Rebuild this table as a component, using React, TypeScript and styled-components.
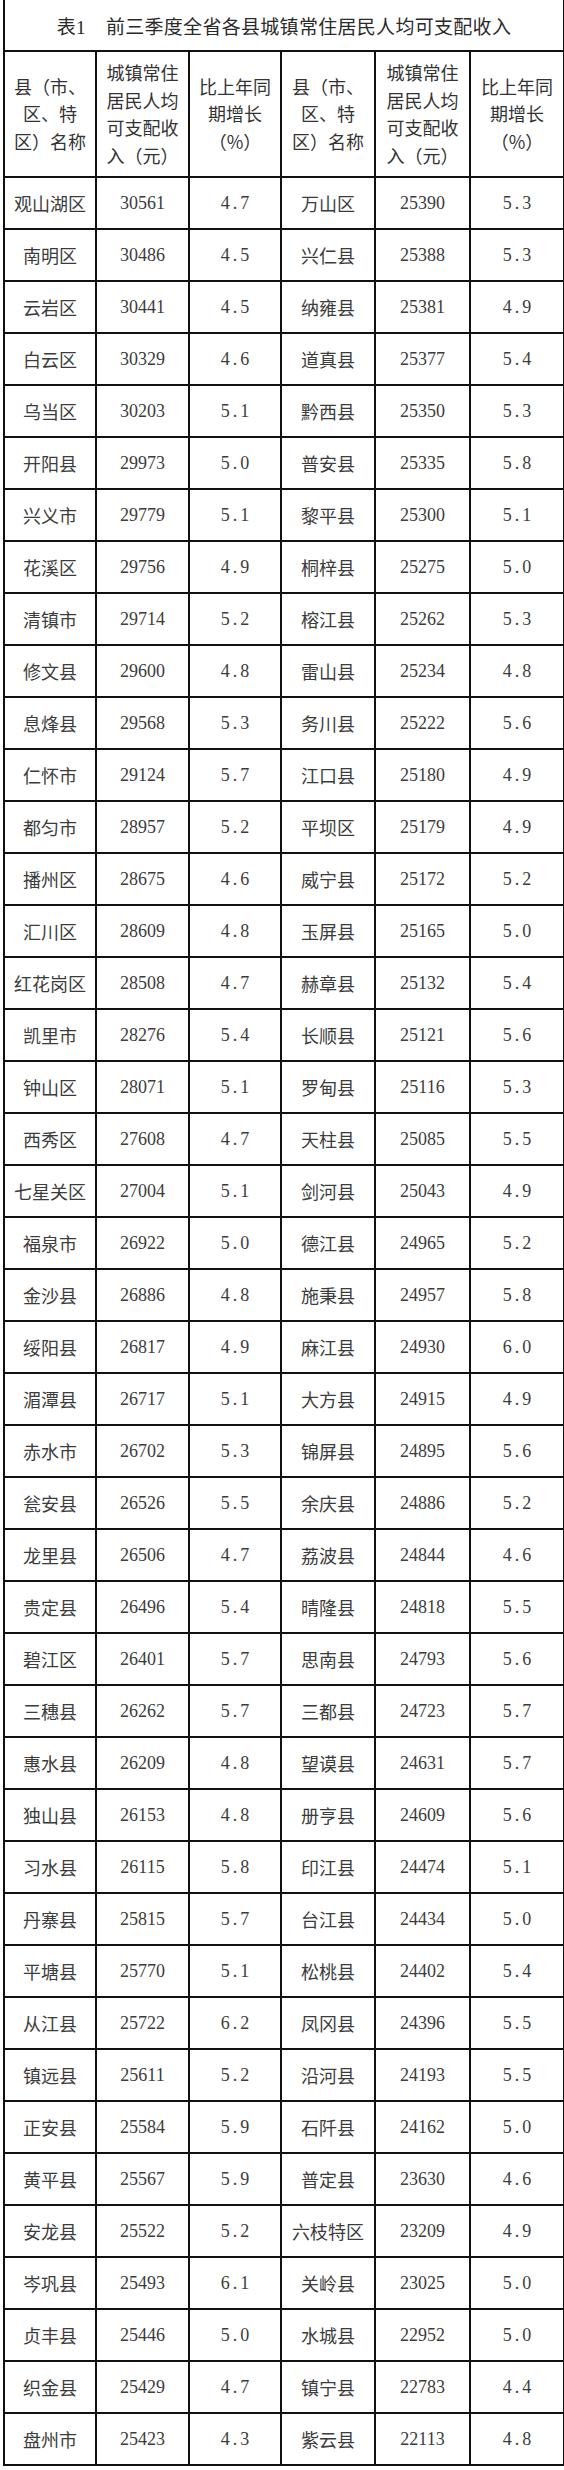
import React from "react";
import styled, { createGlobalStyle } from "styled-components";

const Global = createGlobalStyle`
  html, body { margin: 0; padding: 0; background: #fff; }
  body { font-family: "Liberation Serif", "Noto Sans CJK SC", serif; }
`;

type Row = [string, string, string, string, string, string];

const rows: Row[] = [
  ["观山湖区", "30561", "4.7", "万山区", "25390", "5.3"],
  ["南明区", "30486", "4.5", "兴仁县", "25388", "5.3"],
  ["云岩区", "30441", "4.5", "纳雍县", "25381", "4.9"],
  ["白云区", "30329", "4.6", "道真县", "25377", "5.4"],
  ["乌当区", "30203", "5.1", "黔西县", "25350", "5.3"],
  ["开阳县", "29973", "5.0", "普安县", "25335", "5.8"],
  ["兴义市", "29779", "5.1", "黎平县", "25300", "5.1"],
  ["花溪区", "29756", "4.9", "桐梓县", "25275", "5.0"],
  ["清镇市", "29714", "5.2", "榕江县", "25262", "5.3"],
  ["修文县", "29600", "4.8", "雷山县", "25234", "4.8"],
  ["息烽县", "29568", "5.3", "务川县", "25222", "5.6"],
  ["仁怀市", "29124", "5.7", "江口县", "25180", "4.9"],
  ["都匀市", "28957", "5.2", "平坝区", "25179", "4.9"],
  ["播州区", "28675", "4.6", "威宁县", "25172", "5.2"],
  ["汇川区", "28609", "4.8", "玉屏县", "25165", "5.0"],
  ["红花岗区", "28508", "4.7", "赫章县", "25132", "5.4"],
  ["凯里市", "28276", "5.4", "长顺县", "25121", "5.6"],
  ["钟山区", "28071", "5.1", "罗甸县", "25116", "5.3"],
  ["西秀区", "27608", "4.7", "天柱县", "25085", "5.5"],
  ["七星关区", "27004", "5.1", "剑河县", "25043", "4.9"],
  ["福泉市", "26922", "5.0", "德江县", "24965", "5.2"],
  ["金沙县", "26886", "4.8", "施秉县", "24957", "5.8"],
  ["绥阳县", "26817", "4.9", "麻江县", "24930", "6.0"],
  ["湄潭县", "26717", "5.1", "大方县", "24915", "4.9"],
  ["赤水市", "26702", "5.3", "锦屏县", "24895", "5.6"],
  ["瓮安县", "26526", "5.5", "余庆县", "24886", "5.2"],
  ["龙里县", "26506", "4.7", "荔波县", "24844", "4.6"],
  ["贵定县", "26496", "5.4", "晴隆县", "24818", "5.5"],
  ["碧江区", "26401", "5.7", "思南县", "24793", "5.6"],
  ["三穗县", "26262", "5.7", "三都县", "24723", "5.7"],
  ["惠水县", "26209", "4.8", "望谟县", "24631", "5.7"],
  ["独山县", "26153", "4.8", "册亨县", "24609", "5.6"],
  ["习水县", "26115", "5.8", "印江县", "24474", "5.1"],
  ["丹寨县", "25815", "5.7", "台江县", "24434", "5.0"],
  ["平塘县", "25770", "5.1", "松桃县", "24402", "5.4"],
  ["从江县", "25722", "6.2", "凤冈县", "24396", "5.5"],
  ["镇远县", "25611", "5.2", "沿河县", "24193", "5.5"],
  ["正安县", "25584", "5.9", "石阡县", "24162", "5.0"],
  ["黄平县", "25567", "5.9", "普定县", "23630", "4.6"],
  ["安龙县", "25522", "5.2", "六枝特区", "23209", "4.9"],
  ["岑巩县", "25493", "6.1", "关岭县", "23025", "5.0"],
  ["贞丰县", "25446", "5.0", "水城县", "22952", "5.0"],
  ["织金县", "25429", "4.7", "镇宁县", "22783", "4.4"],
  ["盘州市", "25423", "4.3", "紫云县", "22113", "4.8"],
];

const Table = styled.table`
  margin: 0 0 0 3px;
  width: 560px;
  table-layout: fixed;
  border-collapse: collapse;
  color: #3c3c3c;
`;

const TitleCell = styled.th`
  height: 50px;
  padding: 0;
  border: 2px solid #111;
  border-top: none;
  font-family: "Liberation Serif", "Noto Sans CJK SC", serif;
  font-size: 19px;
  font-weight: 400;
  color: #2a2a2a;
  text-align: center;
  vertical-align: middle;
  letter-spacing: 0.3px;
`;

const Gap = styled.span`
  display: inline-block;
  width: 20px;
`;

const HeadCell = styled.th`
  height: 124px;
  padding: 0;
  border: 2px solid #111;
  font-family: "Noto Sans CJK SC", sans-serif;
  font-size: 18px;
  font-weight: 400;
  line-height: 27.5px;
  color: #333;
  text-align: center;
  vertical-align: middle;
`;

const Cell = styled.td<{ $kind: "name" | "num" | "pct" }>`
  height: 50px;
  padding: 0;
  border: 2px solid #111;
  text-align: center;
  vertical-align: middle;
  font-size: 18px;
  color: #3c3c3c;
  font-family: ${(p) =>
    p.$kind === "name"
      ? `"Noto Sans CJK SC", sans-serif`
      : `"Liberation Serif", "Noto Sans CJK SC", serif`};
  letter-spacing: ${(p) => (p.$kind === "pct" ? "3px" : "0")};
  padding-left: ${(p) => (p.$kind === "pct" ? "3px" : "0")};
`;

const widths = [92, 93, 92, 94, 95, 94];

function Header() {
  const name = (
    <>
      县（市、
      <br />
      区、特
      <br />
      区）名称
    </>
  );
  const income = (
    <>
      城镇常住
      <br />
      居民人均
      <br />
      可支配收
      <br />
      入（元）
    </>
  );
  const pct = (
    <>
      比上年同
      <br />
      期增长
      <br />
      （%）
    </>
  );
  return (
    <tr>
      <HeadCell>{name}</HeadCell>
      <HeadCell>{income}</HeadCell>
      <HeadCell>{pct}</HeadCell>
      <HeadCell>{name}</HeadCell>
      <HeadCell>{income}</HeadCell>
      <HeadCell>{pct}</HeadCell>
    </tr>
  );
}

export default function App() {
  return (
    <>
      <Global />
      <Table>
        <colgroup>
          {widths.map((w, i) => (
            <col key={i} style={{ width: w }} />
          ))}
        </colgroup>
        <thead>
          <tr>
            <TitleCell colSpan={6}>
              表1<Gap />前三季度全省各县城镇常住居民人均可支配收入
            </TitleCell>
          </tr>
          <Header />
        </thead>
        <tbody>
          {rows.map((r) => (
            <tr key={r[0]}>
              <Cell $kind="name">{r[0]}</Cell>
              <Cell $kind="num">{r[1]}</Cell>
              <Cell $kind="pct">{r[2]}</Cell>
              <Cell $kind="name">{r[3]}</Cell>
              <Cell $kind="num">{r[4]}</Cell>
              <Cell $kind="pct">{r[5]}</Cell>
            </tr>
          ))}
        </tbody>
      </Table>
    </>
  );
}
